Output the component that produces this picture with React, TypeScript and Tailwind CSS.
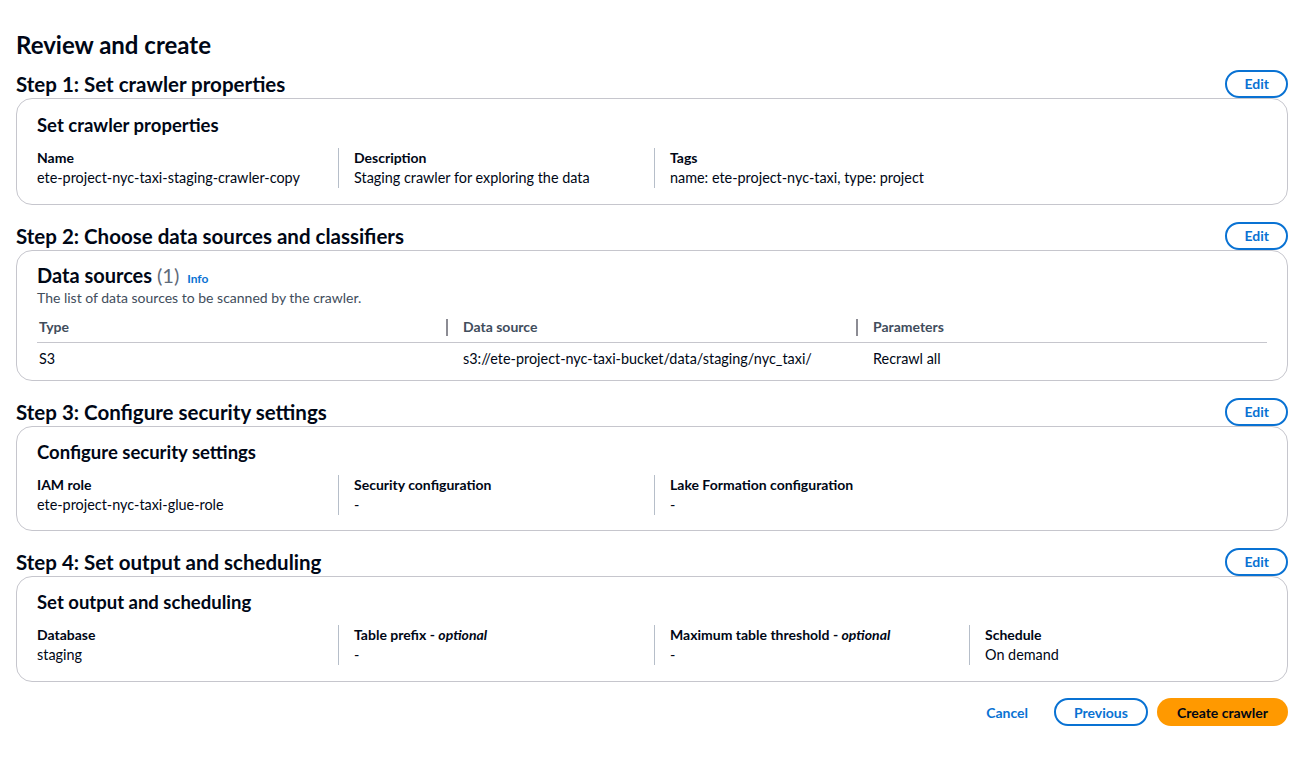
import React from 'react';

const font = { fontFamily: 'Lato, "Open Sans", Arial, sans-serif' };

interface Field {
  label: string;
  optional?: boolean;
  value: string;
}

const EditButton = () => (
  <button className="h-[28px] px-[17px] rounded-full border-2 border-[#0972d3] text-[#0972d3] text-[14px] font-bold leading-none bg-white">
    Edit
  </button>
);

const StepHeader = ({ title }: { title: string }) => (
  <div className="flex items-center justify-between">
    <h2 className="text-[20.5px] font-bold leading-[24px] text-[#000716]">{title}</h2>
    <EditButton />
  </div>
);

const KeyValues = ({ fields }: { fields: Field[] }) => (
  <div className="grid grid-cols-[301px_316px_315px_1fr] mt-[11px]">
    {fields.map((f, i) => (
      <div key={f.label} className={i === 0 ? 'pr-4' : 'border-l border-[#b6bec9] pl-[15px] pr-4'}>
        <div className="text-[14px] font-bold leading-[20px] text-[#000716]">
          {f.label}
          {f.optional && (
            <>
              {' - '}
              <i>optional</i>
            </>
          )}
        </div>
        <div className="text-[14.4px] leading-[20px] text-[#000716]">{f.value}</div>
      </div>
    ))}
  </div>
);

const Card = ({ children, pad }: { children: React.ReactNode; pad: string }) => (
  <div className={`border border-[#c6c6cd] rounded-[16px] bg-white px-[20px] ${pad}`}>{children}</div>
);

const CardTitle = ({ title }: { title: string }) => (
  <h3 className="text-[18.5px] font-bold leading-[24px] text-[#000716]">{title}</h3>
);

export default function App() {
  return (
    <div className="bg-white pl-[16px] pr-[5px] pt-[30px] text-[#000716]" style={font}>
      <h1 className="text-[24px] font-bold leading-[30px] mb-[10px]">Review and create</h1>

      <section>
        <StepHeader title="Step 1: Set crawler properties" />
        <Card pad="pt-[14px] pb-[16px]">
          <CardTitle title="Set crawler properties" />
          <KeyValues
            fields={[
              { label: 'Name', value: 'ete-project-nyc-taxi-staging-crawler-copy' },
              { label: 'Description', value: 'Staging crawler for exploring the data' },
              { label: 'Tags', value: 'name: ete-project-nyc-taxi, type: project' },
            ]}
          />
        </Card>
      </section>

      <section className="mt-[17px]">
        <StepHeader title="Step 2: Choose data sources and classifiers" />
        <div className="border border-[#c6c6cd] rounded-[16px] bg-white px-[20px] pt-[12px] pb-[5px]">
          <div className="flex items-baseline gap-[8px]">
            <h3 className="text-[20px] font-bold leading-[24px]">
              Data sources <span className="font-normal text-[#5f6b7a]">(1)</span>
            </h3>
            <span className="text-[12px] font-bold text-[#0972d3]">Info</span>
          </div>
          <p className="text-[14px] leading-[20px] text-[#414d5c]">The list of data sources to be scanned by the crawler.</p>
          <table className="w-full mt-[4px] text-[14px] border-collapse">
            <thead>
              <tr className="border-b border-[#c6c6cd]">
                <th className="w-[409px] text-left font-bold leading-[20px] py-[5px] pl-[2px] text-[#414d5c]">Type</th>
                <th className="w-[410px] text-left font-bold leading-[20px] py-[5px] text-[#414d5c]">
                  <div className="flex items-center">
                    <span className="w-[2px] h-[17px] bg-[#8c8c94] mr-[15px]" />
                    Data source
                  </div>
                </th>
                <th className="text-left font-bold leading-[20px] py-[5px] text-[#414d5c]">
                  <div className="flex items-center">
                    <span className="w-[2px] h-[17px] bg-[#8c8c94] mr-[15px]" />
                    Parameters
                  </div>
                </th>
              </tr>
            </thead>
            <tbody>
              <tr className="text-[14.4px]">
                <td className="py-[6px] pl-[2px] leading-[20px]">S3</td>
                <td className="py-[6px] pl-[17px] leading-[20px]">s3://ete-project-nyc-taxi-bucket/data/staging/nyc_taxi/</td>
                <td className="py-[6px] pl-[17px] leading-[20px]">Recrawl all</td>
              </tr>
            </tbody>
          </table>
        </div>
      </section>

      <section className="mt-[17px]">
        <StepHeader title="Step 3: Configure security settings" />
        <Card pad="pt-[13px] pb-[15px]">
          <CardTitle title="Configure security settings" />
          <KeyValues
            fields={[
              { label: 'IAM role', value: 'ete-project-nyc-taxi-glue-role' },
              { label: 'Security configuration', value: '-' },
              { label: 'Lake Formation configuration', value: '-' },
            ]}
          />
        </Card>
      </section>

      <section className="mt-[17px]">
        <StepHeader title="Step 4: Set output and scheduling" />
        <Card pad="pt-[13px] pb-[16px]">
          <CardTitle title="Set output and scheduling" />
          <KeyValues
            fields={[
              { label: 'Database', value: 'staging' },
              { label: 'Table prefix', optional: true, value: '-' },
              { label: 'Maximum table threshold', optional: true, value: '-' },
              { label: 'Schedule', value: 'On demand' },
            ]}
          />
        </Card>
      </section>

      <div className="flex justify-end items-center gap-[9px] mt-[16px]">
        <button className="h-[28px] px-[17px] text-[14px] font-bold text-[#0972d3]">Cancel</button>
        <button className="h-[28px] px-[18px] rounded-full border-2 border-[#0972d3] text-[14px] font-bold text-[#0972d3]">
          Previous
        </button>
        <button className="h-[28px] px-[20px] rounded-full bg-[#ff9900] text-[14px] font-bold text-[#000716]">
          Create crawler
        </button>
      </div>
    </div>
  );
}
